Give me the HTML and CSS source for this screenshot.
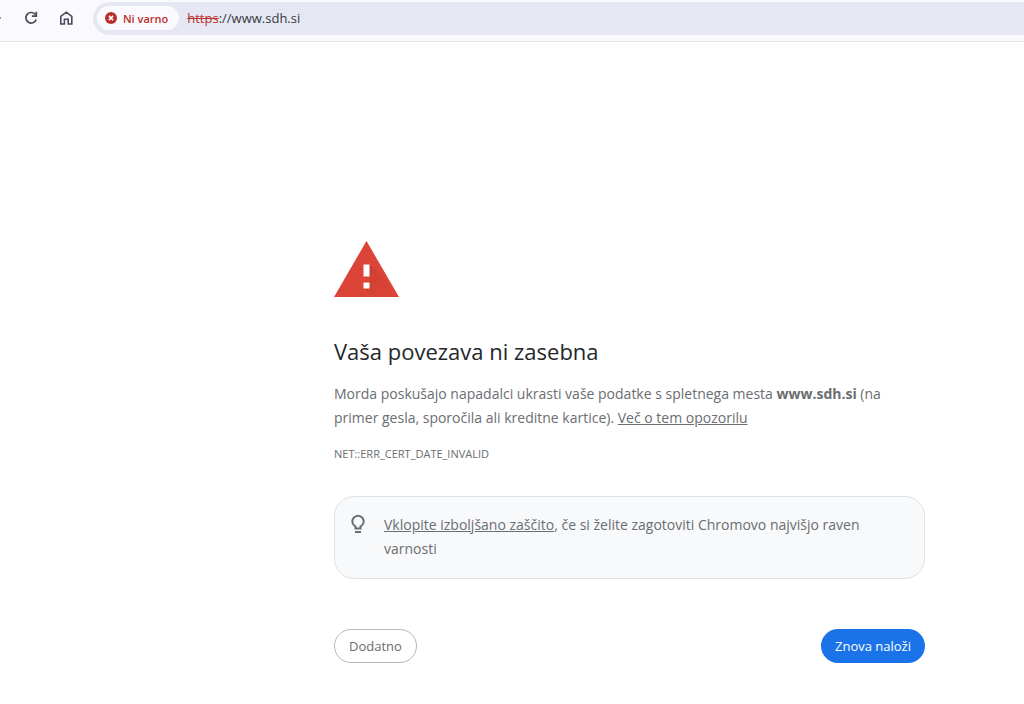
FILE: index.html
```html
<!DOCTYPE html>
<html lang="sl">
<head>
<meta charset="utf-8">
<meta name="viewport" content="width=device-width, initial-scale=1">
<title>Napaka zasebnosti</title>
<link rel="stylesheet" href="styles.css">
</head>
<body>
<header class="toolbar">
<button class="tool forward" type="button" aria-label="Naprej">
<svg width="16" height="16" viewBox="0 0 16 16"><path d="M0 8h15" fill="none" stroke="#9a9ba3" stroke-width="2"/></svg>
</button>
<button class="tool" type="button" aria-label="Znova naloži stran">
<svg width="16" height="16" viewBox="0 0 16 16" fill="none" stroke="#474b5a" stroke-width="1.7"><path d="M12.6 4.900A5.300 5.300 0 1 0 13.200 9.400"/><path d="M13.300 1.800v4.300H8.900"/></svg>
</button>
<button class="tool" type="button" aria-label="Domača stran">
<svg width="16" height="16" viewBox="0 0 16 16" fill="none" stroke="#474b5a" stroke-width="1.6"><path d="M2.800 6.300L8.300 2.200l5.500 4.100v7.700H10.200V9.200H6.400v4.800H2.800z"/></svg>
</button>
<div class="omnibox">
<button class="chip" type="button">
<svg width="12" height="12" viewBox="0 0 12 12"><circle cx="6" cy="6" r="6" fill="#b9302b"/><path d="M3.900 3.900l4.200 4.200M8.100 3.900L3.900 8.100" stroke="#fff" stroke-width="1.500"/></svg>
<span>Ni varno</span>
</button>
<a class="url" href="#"><s>https</s>://www.sdh.si</a>
</div>
</header>
<main class="warning">
<svg class="triangle" width="65" height="56" viewBox="0 0 65 56">
<defs>
<linearGradient id="shade" x1="0" y1="0" x2="1" y2="1">
<stop offset="0" stop-color="#b9372c" stop-opacity=".7"/>
<stop offset="1" stop-color="#db4437" stop-opacity="0"/>
</linearGradient>
</defs>
<path d="M32.500 0L65 56H0z" fill="#db4437"/>
<path d="M35.500 23.500L51 39l10 17H38.500L30 47.500h5.500z" fill="url(#shade)"/>
<path d="M29.500 23.500h6v12h-6zM29.500 41.500h6v6h-6z" fill="#fff"/>
</svg>
<h1>Vaša povezava ni zasebna</h1>
<p class="message">Morda poskušajo napadalci ukrasti vaše podatke s spletnega mesta <strong>www.sdh.si</strong> (na primer gesla, sporočila ali kreditne kartice). <a href="#">Več o tem opozorilu</a></p>
<p class="code">NET::ERR_CERT_DATE_INVALID</p>
<section class="tip">
<svg width="24" height="24" viewBox="0 0 24 24" fill="none" stroke="#6b6e70" stroke-width="2"><path d="M9.500 15.500v-2A5.700 5.700 0 1 1 14.500 13.500v2z"/><path d="M9 19h6"/></svg>
<p><a href="#">Vklopite izboljšano zaščito</a>, če si želite zagotoviti Chromovo najvišjo raven varnosti</p>
</section>
<div class="buttons">
<button class="details" type="button">Dodatno</button>
<button class="reload" type="button">Znova naloži</button>
</div>
</main>
</body>
</html>
```

FILE: styles.css
```css
* {
box-sizing: border-box;
}
body {
margin: 0;
background: #fff;
color: #6a6d71;
font-family: "Open Sans", "Noto Sans", sans-serif;
font-size: 14px;
}
button {
border: none;
font: inherit;
cursor: pointer;
}
p {
margin: 0;
}
a {
color: inherit;
}
.toolbar {
display: flex;
align-items: center;
height: 42px;
padding-bottom: 5px;
background: #faf9fe;
border-bottom: 1px solid #e4e4ec;
}
.tool {
display: flex;
flex: none;
margin-right: 19px;
padding: 0;
background: none;
}
.forward {
margin-left: -14px;
margin-right: 21px;
}
.omnibox {
display: flex;
flex: 1;
align-items: center;
gap: 8px;
height: 33px;
padding-left: 4px;
border-radius: 17px 0 0 17px;
background: #e5e8f3;
}
.chip {
display: flex;
align-items: center;
gap: 6px;
height: 24px;
padding: 0 11px 0 8px;
border-radius: 12px;
background: #faf9fe;
color: #b9302b;
font-size: 11px;
font-weight: 600;
}
.url {
color: #36383e;
font-size: 13px;
text-decoration: none;
}
.url s {
color: #b9302b;
}
.warning {
max-width: 925px;
padding: 199px 0 32px 334px;
}
.triangle {
display: block;
}
h1 {
margin: 38px 0 15px;
color: #25272b;
font-size: 22px;
font-weight: 400;
line-height: 32px;
}
.message, .tip {
line-height: 24px;
}
.code {
margin-top: 14px;
font-size: 11px;
line-height: 20px;
}
.tip {
display: flex;
gap: 14px;
margin-top: 32px;
padding: 16px 48px 17px 11px;
border: 1px solid #dfe1e5;
border-radius: 20px;
background: #f8f9fb;
}
.tip svg {
flex: none;
}
.buttons {
display: flex;
justify-content: space-between;
align-items: flex-start;
margin-top: 50px;
}
.details, .reload {
height: 34px;
padding: 0 14px;
border-radius: 17px;
font-size: 13px;
}
.details {
border: 1px solid #b4b8bc;
background: #fff;
color: #6a6d71;
}
.reload {
background: #1a73e8;
color: #fff;
}
```
